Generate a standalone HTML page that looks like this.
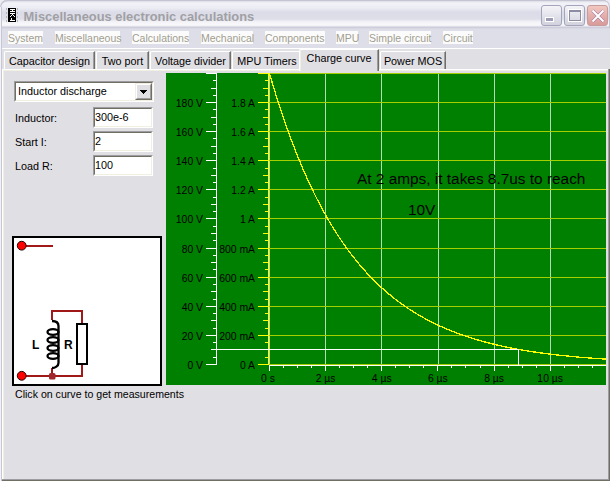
<!DOCTYPE html>
<html><head><meta charset="utf-8">
<style>
*{box-sizing:border-box;margin:0;padding:0}
html,body{width:610px;height:481px;overflow:hidden;background:#e0dfe3}
body{position:relative;font-family:"Liberation Sans",sans-serif;font-size:11px;color:#000}
.abs{position:absolute}
#title{position:absolute;left:0;top:0;width:610px;height:28px;
 background:linear-gradient(#c4c4d2 0px,#dcdce6 1px,#f2f2f8 3px,#ececf4 8px,#dcdce8 12px,#dedee9 19px,#f4f4f8 22px,#f8f8fb 25px,#eeeef4 26px,#cdcddb 27px);
 border-radius:7px 7px 0 0;box-shadow:inset 1px 1px 0 #c4c4d2, inset -1px 0 0 #c4c4d2}
#ttext{position:absolute;left:23.6px;top:9px;font-size:12.9px;font-weight:bold;color:#a0a0a4;white-space:nowrap;letter-spacing:0px}
#menubar{position:absolute;left:0;top:28px;width:610px;height:20px;background:linear-gradient(#d4d4e0 0px,#dcdce6 1px,#dedee8 2px,#dedee8 20px)}
#menuline{position:absolute;left:0;top:48px;width:610px;height:1px;background:#fff}
.mi{position:absolute;top:31px;height:13px;background:#fbfbfc;color:#a29e8e;font-size:10.5px;line-height:15px;white-space:nowrap}
#wl0{position:absolute;left:0;top:7px;width:1px;height:474px;background:#f2f2f6}
#wl1{position:absolute;left:1px;top:7px;width:1px;height:474px;background:#c6c6d6}
/* panel */
#panel{position:absolute;left:2px;top:69px;width:608px;height:412px;
 border-top:1px solid #fff;border-left:1px solid #fff;box-shadow:inset 1px 1px 0 #f1efe2}
#pr1{position:absolute;left:608px;top:69px;width:1px;height:411px;background:#9d9da1}
#pr2{position:absolute;left:609px;top:69px;width:1px;height:412px;background:#716f64}
#pb1{position:absolute;left:2px;top:479px;width:607px;height:1px;background:#9d9da1}
#pb2{position:absolute;left:2px;top:480px;width:608px;height:1px;background:#716f64}
.tab{position:absolute;top:51px;height:18px;border-top:1px solid #fff;border-left:1px solid #fff;border-right:1px solid #716f64;
 box-shadow:inset -1px 0 0 #9d9da1;border-radius:2px 0 0 0;font-size:10.8px;line-height:18px;white-space:nowrap;text-align:center}
.tab.sel{top:49px;height:22px;background:#e0dfe3;z-index:2;border-bottom:none;line-height:17px;box-shadow:inset -1px 0 0 #9d9da1, inset 1px 0 0 #f1efe2}
.combo{position:absolute;left:14px;top:81px;width:140px;height:21px;background:#fff;
 border-top:1px solid #9d9da1;border-left:1px solid #9d9da1;border-right:1px solid #fff;border-bottom:1px solid #fff}
.combo .in{position:absolute;left:0;top:0;right:0;bottom:0;border-top:1px solid #716f64;border-left:1px solid #716f64;border-right:1px solid #f1efe2;border-bottom:1px solid #f1efe2}
.btn{position:absolute;left:119px;top:0px;width:17px;height:17px;background:#e0dfe3;
 border-top:1px solid #f1efe2;border-left:1px solid #f1efe2;border-right:1px solid #716f64;border-bottom:1px solid #716f64}
.btn .b2{position:absolute;left:0;top:0;right:0;bottom:0;border-top:1px solid #fff;border-left:1px solid #fff;border-right:1px solid #9d9da1;border-bottom:1px solid #9d9da1}
.edit{position:absolute;left:93px;width:60px;height:21px;background:#fff;
 border-top:1px solid #9d9da1;border-left:1px solid #9d9da1;border-right:1px solid #fff;border-bottom:1px solid #fff}
.edit .in{position:absolute;left:0;top:0;right:0;bottom:0;border-top:1px solid #716f64;border-left:1px solid #716f64;border-right:1px solid #f1efe2;border-bottom:1px solid #f1efe2;
 padding-left:0px;line-height:17px;font-size:10.8px}
.lab{position:absolute;left:15px;font-size:10.8px;white-space:nowrap}
.lbl{position:absolute;font-size:10.4px;line-height:14px;white-space:nowrap;color:#000;text-align:right}
.tl{width:60px;text-align:center}
.tb{position:absolute;top:5px;width:21px;height:21px;border-radius:3px;border:1px solid #a4a4bc;
 background:linear-gradient(#f4f4f8,#dcdce6 70%,#d2d2de)}
</style></head><body>
<div class="abs" style="left:0;top:0;width:610px;height:10px;background:#ececf2"></div>
<div id="title">
 <svg class="abs" style="left:0;top:0" width="20" height="24" shape-rendering="crispEdges">
  <rect x="8" y="8" width="8" height="14" fill="#000"/>
  <g fill="#b4b4b4"><rect x="6" y="8" width="1" height="2"/><rect x="6" y="12" width="1" height="2"/><rect x="6" y="16" width="1" height="2"/><rect x="6" y="20" width="1" height="2"/>
  <rect x="17" y="8" width="1" height="2"/><rect x="17" y="12" width="1" height="2"/><rect x="17" y="16" width="1" height="2"/><rect x="17" y="20" width="1" height="2"/></g>
  <g fill="#fff">
   <rect x="10" y="9" width="5" height="1"/><rect x="12" y="10" width="1" height="1"/><rect x="10" y="11" width="5" height="1"/>
   <rect x="10" y="13" width="5" height="1"/><rect x="12" y="14" width="1" height="1"/><rect x="11" y="15" width="1" height="1"/><rect x="13" y="15" width="1" height="1"/><rect x="10" y="16" width="1" height="1"/><rect x="14" y="16" width="1" height="1"/>
   <rect x="11" y="18" width="1" height="2"/><rect x="10" y="20" width="5" height="1"/>
  </g>
 </svg>
 <div id="ttext">Miscellaneous electronic calculations</div>
 <div class="tb" style="left:541px"><div class="abs" style="left:3px;top:11px;width:9px;height:5px;background:#9c9cb4;border:1px solid #fff"></div></div>
 <div class="tb" style="left:564px"><div class="abs" style="left:4px;top:4px;width:12px;height:11px;border:1px solid #8c8ca4;border-top:2px solid #8c8ca4;box-shadow:0 0 0 1px #fff"></div></div>
 <div class="tb" style="left:587px;border-color:#c89c9c;background:linear-gradient(#f0c8c0,#e2aaa6 60%,#d89c9a)">
  <svg class="abs" style="left:3px;top:3px" width="14" height="14" viewBox="0 0 14 14"><path d="M1.5 1.5L12.5 12.5M12.5 1.5L1.5 12.5" stroke="#9a6a9a" stroke-width="3"/><path d="M1.5 1.5L12.5 12.5M12.5 1.5L1.5 12.5" stroke="#fff" stroke-width="2"/></svg>
 </div>
</div>
<div id="menubar"></div>
<div id="menuline"></div>
<div class="mi" style="left:8px;width:35px">System</div>
<div class="mi" style="left:55px;width:65px">Miscellaneous</div>
<div class="mi" style="left:132px;width:57px">Calculations</div>
<div class="mi" style="left:201px;width:52px">Mechanical</div>
<div class="mi" style="left:265px;width:60px">Components</div>
<div class="mi" style="left:336px;width:22px">MPU</div>
<div class="mi" style="left:369px;width:62px">Simple circuit</div>
<div class="mi" style="left:443px;width:30px">Circuit</div>
<div id="wl0"></div><div id="wl1"></div>

<div class="tab" style="left:4px;width:91px">Capacitor design</div>
<div class="tab" style="left:96px;width:53px">Two port</div>
<div class="tab" style="left:150px;width:81px">Voltage divider</div>
<div class="tab" style="left:232px;width:70px">MPU Timers</div>
<div class="tab" style="left:380px;width:66px">Power MOS</div>
<div id="panel"></div>
<div class="tab sel" style="left:299px;width:80px">Charge curve</div>
<div id="pr1"></div><div id="pr2"></div><div id="pb1"></div><div id="pb2"></div>

<div class="combo"><div class="in"><div class="abs" style="left:2px;top:1px;font-size:10.8px;line-height:14px;white-space:nowrap">Inductor discharge</div>
 <div class="btn"><div class="b2"><svg class="abs" style="left:2px;top:4px" width="9" height="6" shape-rendering="crispEdges"><path d="M1 1h7v1h-1v1h-1v1h-1v1h-1v-1h-1v-1h-1v-1h-1z" fill="#000"/></svg></div></div></div></div>
<div class="lab" style="top:112px">Inductor:</div>
<div class="lab" style="top:136px">Start I:</div>
<div class="lab" style="top:160px">Load R:</div>
<div class="edit" style="top:107px"><div class="in">300e-6</div></div>
<div class="edit" style="top:131px"><div class="in">2</div></div>
<div class="edit" style="top:155px"><div class="in">100</div></div>

<svg class="abs" style="left:0;top:0" width="610" height="481">
 <rect x="13" y="237" width="148" height="148" fill="#fff" stroke="#000" stroke-width="2"/>
 <g stroke="#a01818" stroke-width="2" fill="none">
  <path d="M26 246H53"/>
  <path d="M26 376H82V364M82 323V311H52V320M52 368V376"/>
 </g>
 <circle cx="21.7" cy="245.7" r="4.4" fill="#ff0000" stroke="#200" stroke-width="1"/>
 <circle cx="21.7" cy="375.8" r="4.4" fill="#ff0000" stroke="#200" stroke-width="1"/>
 <rect x="49" y="373" width="6.5" height="6.5" rx="1.6" fill="#a0282a"/>
 <rect x="77" y="324" width="10" height="40" fill="#fff" stroke="#000" stroke-width="2"/>
 <g stroke="#000" stroke-width="2.3" fill="none">
  <path d="M52 321C55 321 58.5 322 58.5 326V363C58.5 366 55 368 52 368"/>
  <ellipse cx="53" cy="332" rx="5.5" ry="2.8"/>
  <ellipse cx="53" cy="340" rx="5.5" ry="2.8"/>
  <ellipse cx="53" cy="348" rx="5.5" ry="2.8"/>
  <ellipse cx="53" cy="356" rx="5.5" ry="2.8"/>
 </g>
 <text x="32" y="349" font-family="Liberation Sans" font-weight="bold" font-size="12" fill="#000">L</text>
 <text x="64" y="349" font-family="Liberation Sans" font-weight="bold" font-size="12" fill="#000">R</text>
 <g shape-rendering="crispEdges">
<rect x="166" y="73" width="440" height="312" fill="#008000"/>
<line x1="269.5" y1="73" x2="269.5" y2="365" stroke="#b4dcb4" stroke-width="1"/>
<line x1="325.5" y1="73" x2="325.5" y2="365" stroke="#b4dcb4" stroke-width="1"/>
<line x1="381.5" y1="73" x2="381.5" y2="365" stroke="#b4dcb4" stroke-width="1"/>
<line x1="438.5" y1="73" x2="438.5" y2="365" stroke="#b4dcb4" stroke-width="1"/>
<line x1="494.5" y1="73" x2="494.5" y2="365" stroke="#b4dcb4" stroke-width="1"/>
<line x1="550.5" y1="73" x2="550.5" y2="365" stroke="#b4dcb4" stroke-width="1"/>
<line x1="269" y1="364.5" x2="606" y2="364.5" stroke="#a4d000" stroke-width="1"/>
<line x1="269" y1="335.5" x2="606" y2="335.5" stroke="#a4d000" stroke-width="1"/>
<line x1="269" y1="306.5" x2="606" y2="306.5" stroke="#a4d000" stroke-width="1"/>
<line x1="269" y1="277.5" x2="606" y2="277.5" stroke="#a4d000" stroke-width="1"/>
<line x1="269" y1="248.5" x2="606" y2="248.5" stroke="#a4d000" stroke-width="1"/>
<line x1="269" y1="218.5" x2="606" y2="218.5" stroke="#a4d000" stroke-width="1"/>
<line x1="269" y1="189.5" x2="606" y2="189.5" stroke="#a4d000" stroke-width="1"/>
<line x1="269" y1="160.5" x2="606" y2="160.5" stroke="#a4d000" stroke-width="1"/>
<line x1="269" y1="131.5" x2="606" y2="131.5" stroke="#a4d000" stroke-width="1"/>
<line x1="269" y1="102.5" x2="606" y2="102.5" stroke="#a4d000" stroke-width="1"/>
<line x1="269" y1="73.5" x2="606" y2="73.5" stroke="#a4d000" stroke-width="1"/>
<line x1="216.5" y1="73" x2="216.5" y2="365" stroke="#fff" stroke-width="1"/>
<line x1="206" y1="364.5" x2="217" y2="364.5" stroke="#fff" stroke-width="1"/>
<line x1="213" y1="357.5" x2="217" y2="357.5" stroke="#fff" stroke-width="1"/>
<line x1="211" y1="349.5" x2="217" y2="349.5" stroke="#fff" stroke-width="1"/>
<line x1="213" y1="342.5" x2="217" y2="342.5" stroke="#fff" stroke-width="1"/>
<line x1="206" y1="335.5" x2="217" y2="335.5" stroke="#fff" stroke-width="1"/>
<line x1="213" y1="328.5" x2="217" y2="328.5" stroke="#fff" stroke-width="1"/>
<line x1="211" y1="320.5" x2="217" y2="320.5" stroke="#fff" stroke-width="1"/>
<line x1="213" y1="313.5" x2="217" y2="313.5" stroke="#fff" stroke-width="1"/>
<line x1="206" y1="306.5" x2="217" y2="306.5" stroke="#fff" stroke-width="1"/>
<line x1="213" y1="299.5" x2="217" y2="299.5" stroke="#fff" stroke-width="1"/>
<line x1="211" y1="291.5" x2="217" y2="291.5" stroke="#fff" stroke-width="1"/>
<line x1="213" y1="284.5" x2="217" y2="284.5" stroke="#fff" stroke-width="1"/>
<line x1="206" y1="277.5" x2="217" y2="277.5" stroke="#fff" stroke-width="1"/>
<line x1="213" y1="269.5" x2="217" y2="269.5" stroke="#fff" stroke-width="1"/>
<line x1="211" y1="262.5" x2="217" y2="262.5" stroke="#fff" stroke-width="1"/>
<line x1="213" y1="255.5" x2="217" y2="255.5" stroke="#fff" stroke-width="1"/>
<line x1="206" y1="248.5" x2="217" y2="248.5" stroke="#fff" stroke-width="1"/>
<line x1="213" y1="240.5" x2="217" y2="240.5" stroke="#fff" stroke-width="1"/>
<line x1="211" y1="233.5" x2="217" y2="233.5" stroke="#fff" stroke-width="1"/>
<line x1="213" y1="226.5" x2="217" y2="226.5" stroke="#fff" stroke-width="1"/>
<line x1="206" y1="218.5" x2="217" y2="218.5" stroke="#fff" stroke-width="1"/>
<line x1="213" y1="211.5" x2="217" y2="211.5" stroke="#fff" stroke-width="1"/>
<line x1="211" y1="204.5" x2="217" y2="204.5" stroke="#fff" stroke-width="1"/>
<line x1="213" y1="197.5" x2="217" y2="197.5" stroke="#fff" stroke-width="1"/>
<line x1="206" y1="189.5" x2="217" y2="189.5" stroke="#fff" stroke-width="1"/>
<line x1="213" y1="182.5" x2="217" y2="182.5" stroke="#fff" stroke-width="1"/>
<line x1="211" y1="175.5" x2="217" y2="175.5" stroke="#fff" stroke-width="1"/>
<line x1="213" y1="168.5" x2="217" y2="168.5" stroke="#fff" stroke-width="1"/>
<line x1="206" y1="160.5" x2="217" y2="160.5" stroke="#fff" stroke-width="1"/>
<line x1="213" y1="153.5" x2="217" y2="153.5" stroke="#fff" stroke-width="1"/>
<line x1="211" y1="146.5" x2="217" y2="146.5" stroke="#fff" stroke-width="1"/>
<line x1="213" y1="138.5" x2="217" y2="138.5" stroke="#fff" stroke-width="1"/>
<line x1="206" y1="131.5" x2="217" y2="131.5" stroke="#fff" stroke-width="1"/>
<line x1="213" y1="124.5" x2="217" y2="124.5" stroke="#fff" stroke-width="1"/>
<line x1="211" y1="117.5" x2="217" y2="117.5" stroke="#fff" stroke-width="1"/>
<line x1="213" y1="109.5" x2="217" y2="109.5" stroke="#fff" stroke-width="1"/>
<line x1="206" y1="102.5" x2="217" y2="102.5" stroke="#fff" stroke-width="1"/>
<line x1="213" y1="95.5" x2="217" y2="95.5" stroke="#fff" stroke-width="1"/>
<line x1="211" y1="88.5" x2="217" y2="88.5" stroke="#fff" stroke-width="1"/>
<line x1="213" y1="80.5" x2="217" y2="80.5" stroke="#fff" stroke-width="1"/>
<line x1="206" y1="73.5" x2="217" y2="73.5" stroke="#fff" stroke-width="1"/>
<line x1="268.5" y1="73" x2="268.5" y2="365" stroke="#ffff00" stroke-width="1"/>
<line x1="258" y1="364.5" x2="269" y2="364.5" stroke="#ffff00" stroke-width="1"/>
<line x1="265" y1="357.5" x2="269" y2="357.5" stroke="#ffff00" stroke-width="1"/>
<line x1="263" y1="349.5" x2="269" y2="349.5" stroke="#ffff00" stroke-width="1"/>
<line x1="265" y1="342.5" x2="269" y2="342.5" stroke="#ffff00" stroke-width="1"/>
<line x1="258" y1="335.5" x2="269" y2="335.5" stroke="#ffff00" stroke-width="1"/>
<line x1="265" y1="328.5" x2="269" y2="328.5" stroke="#ffff00" stroke-width="1"/>
<line x1="263" y1="320.5" x2="269" y2="320.5" stroke="#ffff00" stroke-width="1"/>
<line x1="265" y1="313.5" x2="269" y2="313.5" stroke="#ffff00" stroke-width="1"/>
<line x1="258" y1="306.5" x2="269" y2="306.5" stroke="#ffff00" stroke-width="1"/>
<line x1="265" y1="299.5" x2="269" y2="299.5" stroke="#ffff00" stroke-width="1"/>
<line x1="263" y1="291.5" x2="269" y2="291.5" stroke="#ffff00" stroke-width="1"/>
<line x1="265" y1="284.5" x2="269" y2="284.5" stroke="#ffff00" stroke-width="1"/>
<line x1="258" y1="277.5" x2="269" y2="277.5" stroke="#ffff00" stroke-width="1"/>
<line x1="265" y1="269.5" x2="269" y2="269.5" stroke="#ffff00" stroke-width="1"/>
<line x1="263" y1="262.5" x2="269" y2="262.5" stroke="#ffff00" stroke-width="1"/>
<line x1="265" y1="255.5" x2="269" y2="255.5" stroke="#ffff00" stroke-width="1"/>
<line x1="258" y1="248.5" x2="269" y2="248.5" stroke="#ffff00" stroke-width="1"/>
<line x1="265" y1="240.5" x2="269" y2="240.5" stroke="#ffff00" stroke-width="1"/>
<line x1="263" y1="233.5" x2="269" y2="233.5" stroke="#ffff00" stroke-width="1"/>
<line x1="265" y1="226.5" x2="269" y2="226.5" stroke="#ffff00" stroke-width="1"/>
<line x1="258" y1="218.5" x2="269" y2="218.5" stroke="#ffff00" stroke-width="1"/>
<line x1="265" y1="211.5" x2="269" y2="211.5" stroke="#ffff00" stroke-width="1"/>
<line x1="263" y1="204.5" x2="269" y2="204.5" stroke="#ffff00" stroke-width="1"/>
<line x1="265" y1="197.5" x2="269" y2="197.5" stroke="#ffff00" stroke-width="1"/>
<line x1="258" y1="189.5" x2="269" y2="189.5" stroke="#ffff00" stroke-width="1"/>
<line x1="265" y1="182.5" x2="269" y2="182.5" stroke="#ffff00" stroke-width="1"/>
<line x1="263" y1="175.5" x2="269" y2="175.5" stroke="#ffff00" stroke-width="1"/>
<line x1="265" y1="168.5" x2="269" y2="168.5" stroke="#ffff00" stroke-width="1"/>
<line x1="258" y1="160.5" x2="269" y2="160.5" stroke="#ffff00" stroke-width="1"/>
<line x1="265" y1="153.5" x2="269" y2="153.5" stroke="#ffff00" stroke-width="1"/>
<line x1="263" y1="146.5" x2="269" y2="146.5" stroke="#ffff00" stroke-width="1"/>
<line x1="265" y1="138.5" x2="269" y2="138.5" stroke="#ffff00" stroke-width="1"/>
<line x1="258" y1="131.5" x2="269" y2="131.5" stroke="#ffff00" stroke-width="1"/>
<line x1="265" y1="124.5" x2="269" y2="124.5" stroke="#ffff00" stroke-width="1"/>
<line x1="263" y1="117.5" x2="269" y2="117.5" stroke="#ffff00" stroke-width="1"/>
<line x1="265" y1="109.5" x2="269" y2="109.5" stroke="#ffff00" stroke-width="1"/>
<line x1="258" y1="102.5" x2="269" y2="102.5" stroke="#ffff00" stroke-width="1"/>
<line x1="265" y1="95.5" x2="269" y2="95.5" stroke="#ffff00" stroke-width="1"/>
<line x1="263" y1="88.5" x2="269" y2="88.5" stroke="#ffff00" stroke-width="1"/>
<line x1="265" y1="80.5" x2="269" y2="80.5" stroke="#ffff00" stroke-width="1"/>
<line x1="258" y1="73.5" x2="269" y2="73.5" stroke="#ffff00" stroke-width="1"/>
<line x1="269" y1="365.5" x2="606" y2="365.5" stroke="#fff" stroke-width="1"/>
<line x1="269.5" y1="365" x2="269.5" y2="371" stroke="#fff" stroke-width="1"/>
<line x1="283.5" y1="365" x2="283.5" y2="368" stroke="#fff" stroke-width="1"/>
<line x1="297.5" y1="365" x2="297.5" y2="368" stroke="#fff" stroke-width="1"/>
<line x1="311.5" y1="365" x2="311.5" y2="368" stroke="#fff" stroke-width="1"/>
<line x1="325.5" y1="365" x2="325.5" y2="371" stroke="#fff" stroke-width="1"/>
<line x1="339.5" y1="365" x2="339.5" y2="368" stroke="#fff" stroke-width="1"/>
<line x1="353.5" y1="365" x2="353.5" y2="368" stroke="#fff" stroke-width="1"/>
<line x1="367.5" y1="365" x2="367.5" y2="368" stroke="#fff" stroke-width="1"/>
<line x1="381.5" y1="365" x2="381.5" y2="371" stroke="#fff" stroke-width="1"/>
<line x1="395.5" y1="365" x2="395.5" y2="368" stroke="#fff" stroke-width="1"/>
<line x1="409.5" y1="365" x2="409.5" y2="368" stroke="#fff" stroke-width="1"/>
<line x1="423.5" y1="365" x2="423.5" y2="368" stroke="#fff" stroke-width="1"/>
<line x1="437.5" y1="365" x2="437.5" y2="371" stroke="#fff" stroke-width="1"/>
<line x1="451.5" y1="365" x2="451.5" y2="368" stroke="#fff" stroke-width="1"/>
<line x1="465.5" y1="365" x2="465.5" y2="368" stroke="#fff" stroke-width="1"/>
<line x1="480.5" y1="365" x2="480.5" y2="368" stroke="#fff" stroke-width="1"/>
<line x1="494.5" y1="365" x2="494.5" y2="371" stroke="#fff" stroke-width="1"/>
<line x1="508.5" y1="365" x2="508.5" y2="368" stroke="#fff" stroke-width="1"/>
<line x1="522.5" y1="365" x2="522.5" y2="368" stroke="#fff" stroke-width="1"/>
<line x1="536.5" y1="365" x2="536.5" y2="368" stroke="#fff" stroke-width="1"/>
<line x1="550.5" y1="365" x2="550.5" y2="371" stroke="#fff" stroke-width="1"/>
<line x1="564.5" y1="365" x2="564.5" y2="368" stroke="#fff" stroke-width="1"/>
<line x1="578.5" y1="365" x2="578.5" y2="368" stroke="#fff" stroke-width="1"/>
<line x1="592.5" y1="365" x2="592.5" y2="368" stroke="#fff" stroke-width="1"/>
<polyline points="269.0,73.50 270.0,75.22 271.0,78.64 272.0,82.01 273.0,85.35 274.0,88.64 275.0,91.90 276.0,95.12 277.0,98.30 278.0,101.44 279.0,104.54 280.0,107.61 281.0,110.65 282.0,113.64 283.0,116.60 284.0,119.53 285.0,122.42 286.0,125.28 287.0,128.10 288.0,130.89 289.0,133.65 290.0,136.38 291.0,139.07 292.0,141.73 293.0,144.36 294.0,146.96 295.0,149.53 296.0,152.07 297.0,154.57 298.0,157.05 299.0,159.50 300.0,161.92 301.0,164.31 302.0,166.67 303.0,169.01 304.0,171.32 305.0,173.60 306.0,175.85 307.0,178.08 308.0,180.28 309.0,182.45 310.0,184.60 311.0,186.73 312.0,188.83 313.0,190.90 314.0,192.95 315.0,194.97 316.0,196.98 317.0,198.95 318.0,200.91 319.0,202.84 320.0,204.75 321.0,206.63 322.0,208.50 323.0,210.34 324.0,212.16 325.0,213.96 326.0,215.73 327.0,217.49 328.0,219.22 329.0,220.94 330.0,222.63 331.0,224.31 332.0,225.96 333.0,227.60 334.0,229.22 335.0,230.81 336.0,232.39 337.0,233.95 338.0,235.49 339.0,237.01 340.0,238.52 341.0,240.01 342.0,241.48 343.0,242.93 344.0,244.36 345.0,245.78 346.0,247.18 347.0,248.57 348.0,249.94 349.0,251.29 350.0,252.63 351.0,253.95 352.0,255.25 353.0,256.54 354.0,257.82 355.0,259.07 356.0,260.32 357.0,261.55 358.0,262.76 359.0,263.97 360.0,265.15 361.0,266.32 362.0,267.48 363.0,268.63 364.0,269.76 365.0,270.88 366.0,271.98 367.0,273.08 368.0,274.16 369.0,275.22 370.0,276.28 371.0,277.32 372.0,278.35 373.0,279.36 374.0,280.37 375.0,281.36 376.0,282.34 377.0,283.31 378.0,284.27 379.0,285.22 380.0,286.15 381.0,287.08 382.0,287.99 383.0,288.90 384.0,289.79 385.0,290.67 386.0,291.54 387.0,292.40 388.0,293.25 389.0,294.10 390.0,294.93 391.0,295.75 392.0,296.56 393.0,297.36 394.0,298.15 395.0,298.94 396.0,299.71 397.0,300.48 398.0,301.23 399.0,301.98 400.0,302.72 401.0,303.45 402.0,304.17 403.0,304.88 404.0,305.58 405.0,306.28 406.0,306.97 407.0,307.65 408.0,308.32 409.0,308.98 410.0,309.64 411.0,310.28 412.0,310.92 413.0,311.56 414.0,312.18 415.0,312.80 416.0,313.41 417.0,314.01 418.0,314.61 419.0,315.20 420.0,315.78 421.0,316.35 422.0,316.92 423.0,317.48 424.0,318.04 425.0,318.59 426.0,319.13 427.0,319.66 428.0,320.19 429.0,320.72 430.0,321.23 431.0,321.74 432.0,322.25 433.0,322.75 434.0,323.24 435.0,323.73 436.0,324.21 437.0,324.68 438.0,325.15 439.0,325.62 440.0,326.08 441.0,326.53 442.0,326.98 443.0,327.42 444.0,327.86 445.0,328.29 446.0,328.72 447.0,329.14 448.0,329.56 449.0,329.97 450.0,330.38 451.0,330.78 452.0,331.18 453.0,331.57 454.0,331.96 455.0,332.35 456.0,332.73 457.0,333.10 458.0,333.47 459.0,333.84 460.0,334.20 461.0,334.56 462.0,334.91 463.0,335.26 464.0,335.61 465.0,335.95 466.0,336.28 467.0,336.62 468.0,336.95 469.0,337.27 470.0,337.59 471.0,337.91 472.0,338.22 473.0,338.54 474.0,338.84 475.0,339.14 476.0,339.44 477.0,339.74 478.0,340.03 479.0,340.32 480.0,340.61 481.0,340.89 482.0,341.17 483.0,341.44 484.0,341.71 485.0,341.98 486.0,342.25 487.0,342.51 488.0,342.77 489.0,343.03 490.0,343.28 491.0,343.53 492.0,343.78 493.0,344.02 494.0,344.27 495.0,344.50 496.0,344.74 497.0,344.97 498.0,345.20 499.0,345.43 500.0,345.66 501.0,345.88 502.0,346.10 503.0,346.32 504.0,346.53 505.0,346.74 506.0,346.95 507.0,347.16 508.0,347.37 509.0,347.57 510.0,347.77 511.0,347.96 512.0,348.16 513.0,348.35 514.0,348.54 515.0,348.73 516.0,348.92 517.0,349.10 518.0,349.28 519.0,349.46 520.0,349.64 521.0,349.82 522.0,349.99 523.0,350.16 524.0,350.33 525.0,350.50 526.0,350.66 527.0,350.83 528.0,350.99 529.0,351.15 530.0,351.30 531.0,351.46 532.0,351.61 533.0,351.77 534.0,351.92 535.0,352.07 536.0,352.21 537.0,352.36 538.0,352.50 539.0,352.64 540.0,352.78 541.0,352.92 542.0,353.06 543.0,353.19 544.0,353.33 545.0,353.46 546.0,353.59 547.0,353.72 548.0,353.84 549.0,353.97 550.0,354.09 551.0,354.22 552.0,354.34 553.0,354.46 554.0,354.58 555.0,354.69 556.0,354.81 557.0,354.92 558.0,355.04 559.0,355.15 560.0,355.26 561.0,355.37 562.0,355.48 563.0,355.58 564.0,355.69 565.0,355.79 566.0,355.89 567.0,356.00 568.0,356.10 569.0,356.20 570.0,356.29 571.0,356.39 572.0,356.49 573.0,356.58 574.0,356.67 575.0,356.77 576.0,356.86 577.0,356.95 578.0,357.04 579.0,357.13 580.0,357.21 581.0,357.30 582.0,357.38 583.0,357.47 584.0,357.55 585.0,357.63 586.0,357.71 587.0,357.79 588.0,357.87 589.0,357.95 590.0,358.03 591.0,358.11 592.0,358.18 593.0,358.26 594.0,358.33 595.0,358.40 596.0,358.47 597.0,358.54 598.0,358.62 599.0,358.68 600.0,358.75 601.0,358.82 602.0,358.89 603.0,358.95 604.0,359.02 605.0,359.08 606.0,359.15" fill="none" stroke="#ffff00" stroke-width="1.3"/>
<line x1="211" y1="349.5" x2="519" y2="349.5" stroke="#fff" stroke-width="1"/>
<line x1="518.5" y1="349" x2="518.5" y2="365" stroke="#fff" stroke-width="1"/>
 </g>
 <text x="357" y="184" font-family="Liberation Sans" font-size="15.4" fill="#000">At 2 amps, it takes 8.7us to reach</text>
 <text x="408" y="215" font-family="Liberation Sans" font-size="15.4" fill="#000">10V</text>
</svg>
<div class="lbl" style="right:407px;top:359px">0 V</div>
<div class="lbl" style="right:355px;top:359px">0 A</div>
<div class="lbl" style="right:407px;top:330px">20 V</div>
<div class="lbl" style="right:355px;top:330px">200 mA</div>
<div class="lbl" style="right:407px;top:301px">40 V</div>
<div class="lbl" style="right:355px;top:301px">400 mA</div>
<div class="lbl" style="right:407px;top:272px">60 V</div>
<div class="lbl" style="right:355px;top:272px">600 mA</div>
<div class="lbl" style="right:407px;top:243px">80 V</div>
<div class="lbl" style="right:355px;top:243px">800 mA</div>
<div class="lbl" style="right:407px;top:213px">100 V</div>
<div class="lbl" style="right:355px;top:213px">1 A</div>
<div class="lbl" style="right:407px;top:184px">120 V</div>
<div class="lbl" style="right:355px;top:184px">1.2 A</div>
<div class="lbl" style="right:407px;top:155px">140 V</div>
<div class="lbl" style="right:355px;top:155px">1.4 A</div>
<div class="lbl" style="right:407px;top:126px">160 V</div>
<div class="lbl" style="right:355px;top:126px">1.6 A</div>
<div class="lbl" style="right:407px;top:97px">180 V</div>
<div class="lbl" style="right:355px;top:97px">1.8 A</div>
<div class="lbl tl" style="left:238.0px;top:372px">0 s</div>
<div class="lbl tl" style="left:295.6px;top:372px">2 µs</div>
<div class="lbl tl" style="left:351.8px;top:372px">4 µs</div>
<div class="lbl tl" style="left:407.9px;top:372px">6 µs</div>
<div class="lbl tl" style="left:464.1px;top:372px">8 µs</div>
<div class="lbl tl" style="left:520.2px;top:372px">10 µs</div>
<div class="lab" style="top:388px;left:15px;font-size:10.6px">Click on curve to get measurements</div>
</body></html>
